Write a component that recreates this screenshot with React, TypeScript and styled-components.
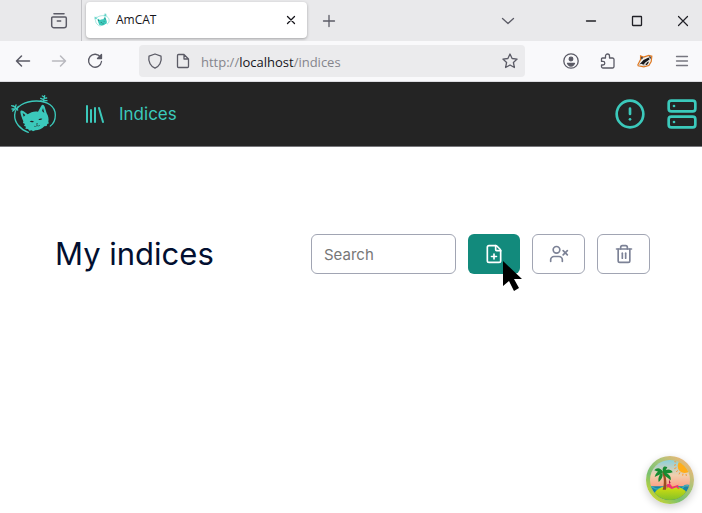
import React from "react";
import styled, { createGlobalStyle, css } from "styled-components";
import { CircleAlert, FilePlus, Library, Server, Trash2, UserX } from "lucide-react";

const GlobalStyle = createGlobalStyle`
  *, *::before, *::after { box-sizing: border-box; }
  body { margin: 0; background: #ffffff; font-family: Inter, "Liberation Sans", sans-serif; }
  button, input { font: inherit; }
`;

const uiFont = css`
  font-family: "Open Sans", "Noto Sans", sans-serif;
`;

const Page = styled.div`
  min-height: 100vh;
  display: flex;
  flex-direction: column;
`;

const TabStrip = styled.header`
  ${uiFont}
  display: flex;
  align-items: center;
  height: 41px;
  background: #e9e9eb;
  color: #4a4a55;
`;

const PinnedArea = styled.div`
  display: flex;
  align-items: center;
  justify-content: flex-end;
  width: 82px;
  height: 41px;
  padding-right: 10px;
  border-right: 1px solid #c4c4c8;
`;

const IconButton = styled.button<{ $size?: number; $tone?: string }>`
  display: inline-flex;
  align-items: center;
  justify-content: center;
  flex: none;
  width: ${(p) => p.$size ?? 24}px;
  height: ${(p) => p.$size ?? 24}px;
  padding: 0;
  border: 0;
  background: transparent;
  color: ${(p) => p.$tone ?? "#5b5b66"};
`;

const Tab = styled.div`
  display: flex;
  align-items: center;
  flex: 0 1 221px;
  height: 36px;
  margin: 0 10px 2px 4px;
  padding: 0 4px 0 8px;
  border-radius: 4px;
  background: #ffffff;
  box-shadow: 0 1px 3px rgba(0, 0, 0, 0.3);
`;

const TabTitle = styled.span`
  flex: 1;
  margin-left: 6px;
  font-size: 12px;
  line-height: 16px;
  color: #15141a;
`;

const WindowControls = styled.div`
  display: flex;
  align-items: center;
  gap: 22px;
  margin-left: auto;
  padding-right: 7px;
`;

const ListTabs = styled.div`
  display: flex;
  margin-right: 37px;
`;

const Toolbar = styled.div`
  ${uiFont}
  display: flex;
  align-items: center;
  height: 41px;
  padding: 0 8px 0 11px;
  border-bottom: 1px solid #dcdce0;
  background: #f9f9fb;
`;

const History = styled.div`
  display: flex;
  gap: 12px;
  margin-right: 32px;
`;

const AddressBar = styled.div`
  display: flex;
  align-items: center;
  flex: 1;
  height: 32px;
  padding: 0 3px 0 4px;
  border-radius: 4px;
  background: #ebebed;
`;

const Address = styled.span`
  flex: 1;
  padding-top: 2px;
  margin-left: 6px;
  font-size: 13px;
  line-height: 20px;
  color: #85858c;

  b { font-weight: 400; color: #15141a; }
`;

const SiteInfo = styled.div`
  display: flex;
  gap: 4px;
`;

const Extensions = styled.div`
  display: flex;
  gap: 13px;
  margin-left: 34px;
`;

const Nav = styled.nav`
  display: flex;
  align-items: center;
  height: 65px;
  padding: 0 4px 0 10px;
  border-bottom: 1px solid #77777b;
  background: #242424;
  color: #3bc9bb;
`;

const HomeLink = styled.a`
  display: flex;
  margin-right: 25px;
`;

const NavLink = styled.a`
  display: flex;
  align-items: center;
  gap: 12px;
  font-size: 17px;
  line-height: 24px;
  color: #3bc9bb;
  text-decoration: none;
`;

const NavActions = styled.div`
  display: flex;
  gap: 20px;
  margin-left: auto;
`;

const Main = styled.main`
  flex: 1;
  padding: 87px 52px 0 55px;
`;

const TitleRow = styled.div`
  display: flex;
  align-items: center;
  justify-content: space-between;
  gap: 12px;
`;

const Title = styled.h1`
  margin: 0;
  font-size: 31px;
  font-weight: 400;
  line-height: 40px;
  color: #020f30;
  white-space: nowrap;
`;

const Actions = styled.div`
  display: flex;
  gap: 12px;
`;

const SearchInput = styled.input`
  width: 145px;
  height: 40px;
  padding: 0 12px;
  border: 1px solid #a1a5b3;
  border-radius: 6px;
  background: #ffffff;
  font-size: 15px;
  line-height: 20px;

  &::placeholder { color: #777777; opacity: 1; }
`;

const ActionButton = styled.button<{ $primary?: boolean }>`
  position: relative;
  display: flex;
  align-items: center;
  justify-content: center;
  width: ${(p) => (p.$primary ? 52 : 53)}px;
  height: 40px;
  padding: 0;
  border: ${(p) => (p.$primary ? "0" : "1px solid #a1a5b3")};
  border-radius: 6px;
  background: ${(p) => (p.$primary ? "#128a7c" : "#ffffff")};
  color: ${(p) => (p.$primary ? "#ffffff" : "#7c8296")};
`;

const Pointer = styled.svg`
  position: absolute;
  left: 34px;
  top: 26px;
  z-index: 1;
  pointer-events: none;
`;

const IslandButton = styled.button`
  position: fixed;
  right: 8px;
  bottom: 9px;
  width: 48px;
  height: 48px;
  padding: 0;
  border: 0;
  border-radius: 50%;
  background: transparent;
  box-shadow: 0 3px 8px rgba(0, 0, 0, 0.2);

  svg { display: block; }
`;

type GlyphProps = { children: React.ReactNode; size?: number; weight?: number };

function Glyph({ children, size = 16, weight = 1.3 }: GlyphProps) {
  return (
    <svg width={size} height={size} viewBox="0 0 16 16" fill="none" stroke="currentColor"
      strokeWidth={weight} strokeLinecap="round" strokeLinejoin="round" aria-hidden="true">
      {children}
    </svg>
  );
}

function CatLogo({ width, height }: { width: number; height: number }) {
  return (
    <svg width={width} height={height} viewBox="15 12 144 120" fill="#3bc9bb" aria-hidden="true">
      <path d="M70 127C46 119 28 98 29 75C30 49 60 33 94 33C128 33 151 49 151 75C151 89 146 101 136 108"
        fill="none" stroke="#3bc9bb" strokeWidth="4" strokeLinecap="round" />
      <path d="M38 60L26 48M34 56L21 57M31 52L33 45M27 50L20 47M28 59L23 63M35 56L40 49"
        stroke="#3bc9bb" strokeWidth="4" strokeLinecap="round" />
      <path d="M115 35L119 17M116 29L107 25M117 25L125 24M117 31L126 32M118 21L112 18M115 34L107 33"
        stroke="#3bc9bb" strokeWidth="4" strokeLinecap="round" />
      <path d="M55 94C51 84 47 75 46 66C46 60 51 60 56 64L68 73C77 66 88 63 99 65L109 47C112 42 117 44 119 50L125 70C130 78 132 88 130 96L132 100L127 102L125 108L118 109C111 117 101 121 91 121L84 124L80 121L73 122L69 117L61 116L63 110L57 107L60 102L54 99Z" />
      <path d="M56 80L53 69L61 75ZM111 63L114 54L118 69Z" fill="#242424" />
      <path d="M74 94Q81 90 87 95Q80 99 74 94ZM100 89Q105 84 112 86Q108 92 100 89ZM93 101L99 100L96 104Z" fill="#242424" />
      <path d="M96 104V107Q92 111 87 109M96 107Q101 109 105 106" fill="none" stroke="#242424" strokeWidth="1.5" />
    </svg>
  );
}

function BadgerIcon() {
  return (
    <svg width="16" height="14" viewBox="0 0 54 46" aria-hidden="true">
      <path d="M3 36L12 18L12 6L22 10L40 4L50 7L48 25L40 38L23 43L4 39Z" fill="#f3f0ea" stroke="#df7821" strokeWidth="4" />
      <path d="M7 36L22 20L39 11L43 17L28 28L22 36L14 32ZM14 9L21 12L15 19ZM40 7L47 9L45 17Z" fill="#17171b" />
      <path d="M9 36L21 38L42 20L37 34L23 40Z" fill="#b5b1ad" />
      <path d="M26 25L35 19M38 27L31 36" stroke="#17171b" strokeWidth="4" />
    </svg>
  );
}

function Island() {
  return (
    <svg width="48" height="48" viewBox="0 0 144 144" aria-hidden="true">
      <defs>
        <linearGradient id="rim" x1="0.9" y1="0.1" x2="0.2" y2="0.9">
          <stop offset="0" stopColor="#f3b577" />
          <stop offset="0.4" stopColor="#a5c578" />
          <stop offset="0.7" stopColor="#78c071" />
          <stop offset="1" stopColor="#c2d336" />
        </linearGradient>
        <linearGradient id="sky" x1="0" y1="0" x2="0" y2="1">
          <stop offset="0.05" stopColor="#80d1df" />
          <stop offset="0.4" stopColor="#f1cfad" />
          <stop offset="0.7" stopColor="#ff967c" />
        </linearGradient>
        <linearGradient id="hill" x1="0" y1="0" x2="0" y2="1">
          <stop offset="0" stopColor="#dce00c" />
          <stop offset="1" stopColor="#5bb535" />
        </linearGradient>
        <clipPath id="scene"><circle cx="72" cy="72" r="60" /></clipPath>
      </defs>
      <circle cx="72" cy="72" r="72" fill="url(#rim)" />
      <g clipPath="url(#scene)">
        <rect width="144" height="144" fill="url(#sky)" />
        <circle cx="116" cy="30" r="21" fill="#ffad19" />
        <path d="M91 18L85 17M90 26L84 28M91 35L85 38M95 43L91 48M102 49L99 55M111 53L110 59M120 54L121 60"
          stroke="#f99935" strokeWidth="3" />
        <path d="M0 91H144V140H0Z" fill="#1685a5" />
        <path d="M0 94Q12 88 24 96T49 94T82 96T111 94T144 96" fill="none" stroke="#36adb8" strokeWidth="4" />
        <ellipse cx="74" cy="120" rx="50" ry="31" fill="url(#hill)" />
        <path d="M50 101C56 82 54 63 48 47L55 45C61 65 63 84 60 101Z" fill="#9b4d22" />
        <path d="M51 49C40 42 30 47 26 63C37 58 44 56 51 49ZM51 48C44 34 31 34 25 43C36 48 43 49 51 48ZM51 47C47 31 57 29 64 34C61 41 57 46 51 47ZM51 48C62 37 76 39 80 49C68 53 60 53 51 48ZM51 49C66 51 77 60 74 73C64 64 56 62 51 49ZM49 50C53 60 46 71 38 78C35 65 40 55 49 50Z" fill="#168b31" />
        <path d="M63 85L72 83L79 92L98 86L95 92L101 96L97 99L91 94L77 99L66 93L62 98Z" fill="#ee3274" />
        <path d="M69 70L74 81L69 83Z" fill="#ad194c" />
      </g>
    </svg>
  );
}

function BrowserTabs() {
  return (
    <TabStrip>
      <PinnedArea>
        <IconButton aria-label="Recent browsing">
          <Glyph size={18}>
            <path d="M3.500 1.500h9M2.500 4.500h11a1 1 0 0 1 1 1v6.500a2 2 0 0 1-2 2h-9a2 2 0 0 1-2-2V5.500a1 1 0 0 1 1-1ZM6.500 8h3" />
          </Glyph>
        </IconButton>
      </PinnedArea>
      <Tab>
        <CatLogo width={16} height={14} />
        <TabTitle>AmCAT</TabTitle>
        <IconButton aria-label="Close tab" $tone="#15141a">
          <Glyph><path d="m4.500 4.500 7 7m0-7-7 7" /></Glyph>
        </IconButton>
      </Tab>
      <IconButton aria-label="New tab">
        <Glyph><path d="M8 2.500v11M2.500 8h11" /></Glyph>
      </IconButton>
      <WindowControls>
        <ListTabs>
          <IconButton aria-label="List all tabs">
            <Glyph><path d="m2.500 5.500 5.500 5 5.500-5" /></Glyph>
          </IconButton>
        </ListTabs>
        <IconButton aria-label="Minimize" $tone="#202026">
          <Glyph><path d="M3.500 8h9" /></Glyph>
        </IconButton>
        <IconButton aria-label="Maximize" $tone="#202026">
          <Glyph><rect x="3.500" y="3.500" width="9" height="9" rx="0.500" /></Glyph>
        </IconButton>
        <IconButton aria-label="Close window" $tone="#202026">
          <Glyph weight={1.2}><path d="m3.500 3.500 9 9m0-9-9 9" /></Glyph>
        </IconButton>
      </WindowControls>
    </TabStrip>
  );
}

function BrowserToolbar() {
  return (
    <Toolbar>
      <History>
        <IconButton aria-label="Back">
          <Glyph weight={1.5}><path d="M14.500 8h-13M6.500 3l-5 5 5 5" /></Glyph>
        </IconButton>
        <IconButton aria-label="Forward" $tone="#b9b9bf">
          <Glyph weight={1.5}><path d="M1.500 8h13M9.500 3l5 5-5 5" /></Glyph>
        </IconButton>
        <IconButton aria-label="Reload">
          <Glyph>
            <path d="M13.500 4.200A6.500 6.500 0 1 0 14.500 8.500" />
            <path d="M14.500 1.500v4h-4Z" fill="currentColor" />
          </Glyph>
        </IconButton>
      </History>
      <AddressBar>
        <SiteInfo>
          <IconButton aria-label="Tracking protection">
            <Glyph><path d="M8 1 14 3.200C15.200 9 12 13.500 8 15.200 4 13.500.800 9 2 3.200Z" /></Glyph>
          </IconButton>
          <IconButton aria-label="Site information">
            <Glyph>
              <path d="M3.500 1.500H9l4.500 4.500v7.500a1 1 0 0 1-1 1h-9a1 1 0 0 1-1-1v-11a1 1 0 0 1 1-1ZM9 1.500V6h4.500" />
            </Glyph>
          </IconButton>
        </SiteInfo>
        <Address>http://<b>localhost</b>/indices</Address>
        <IconButton aria-label="Bookmark this page">
          <Glyph>
            <path d="m8 1 2.100 4.500 5 .600-3.700 3.400 1 5L8 12l-4.400 2.500 1-5L.900 6.100l5-.600Z" />
          </Glyph>
        </IconButton>
      </AddressBar>
      <Extensions>
        <IconButton aria-label="Account">
          <Glyph>
            <circle cx="8" cy="8" r="7.200" />
            <circle cx="8" cy="6" r="1.800" fill="currentColor" />
            <path d="M4.500 10.300h7q-1 2.700-3.500 2.700t-3.500-2.700Z" fill="currentColor" />
          </Glyph>
        </IconButton>
        <IconButton aria-label="Extensions">
          <Glyph>
            <path d="M5.500 5V3a2 2 0 0 1 4 0v2h3a1.500 1.500 0 0 1 1.500 1.500v7a1.500 1.500 0 0 1-1.500 1.500H3a1.500 1.500 0 0 1-1.500-1.500V12H3a1.800 1.800 0 0 0 0-3.600H1.500V6A1 1 0 0 1 2.500 5Z" />
          </Glyph>
        </IconButton>
        <IconButton aria-label="Privacy Badger"><BadgerIcon /></IconButton>
        <IconButton aria-label="Application menu" $tone="#777780">
          <Glyph><path d="M2.500 3.500h11M2.500 8h11M2.500 12.500h11" /></Glyph>
        </IconButton>
      </Extensions>
    </Toolbar>
  );
}

export default function App() {
  return (
    <Page>
      <GlobalStyle />
      <BrowserTabs />
      <BrowserToolbar />
      <Nav>
        <HomeLink href="/" aria-label="AmCAT home"><CatLogo width={48} height={40} /></HomeLink>
        <NavLink href="/indices"><Library size={24} /> Indices</NavLink>
        <NavActions>
          <IconButton aria-label="Notices" $size={32} $tone="#3bc9bb"><CircleAlert size={32} /></IconButton>
          <IconButton aria-label="Server" $size={32} $tone="#3bc9bb"><Server size={32} /></IconButton>
        </NavActions>
      </Nav>
      <Main>
        <TitleRow>
          <Title>My indices</Title>
          <Actions>
            <SearchInput type="search" placeholder="Search" aria-label="Search" />
            <ActionButton $primary aria-label="Create index">
              <FilePlus size={20} />
              <Pointer width="22" height="34" viewBox="0 0 22 34" aria-hidden="true">
                <path d="M1 1V26L7 21L12 31L17 28L12 19H20Z" fill="#000000" />
              </Pointer>
            </ActionButton>
            <ActionButton aria-label="Remove user"><UserX size={20} /></ActionButton>
            <ActionButton aria-label="Delete index"><Trash2 size={20} /></ActionButton>
          </Actions>
        </TitleRow>
      </Main>
      <IslandButton aria-label="Developer tools"><Island /></IslandButton>
    </Page>
  );
}
